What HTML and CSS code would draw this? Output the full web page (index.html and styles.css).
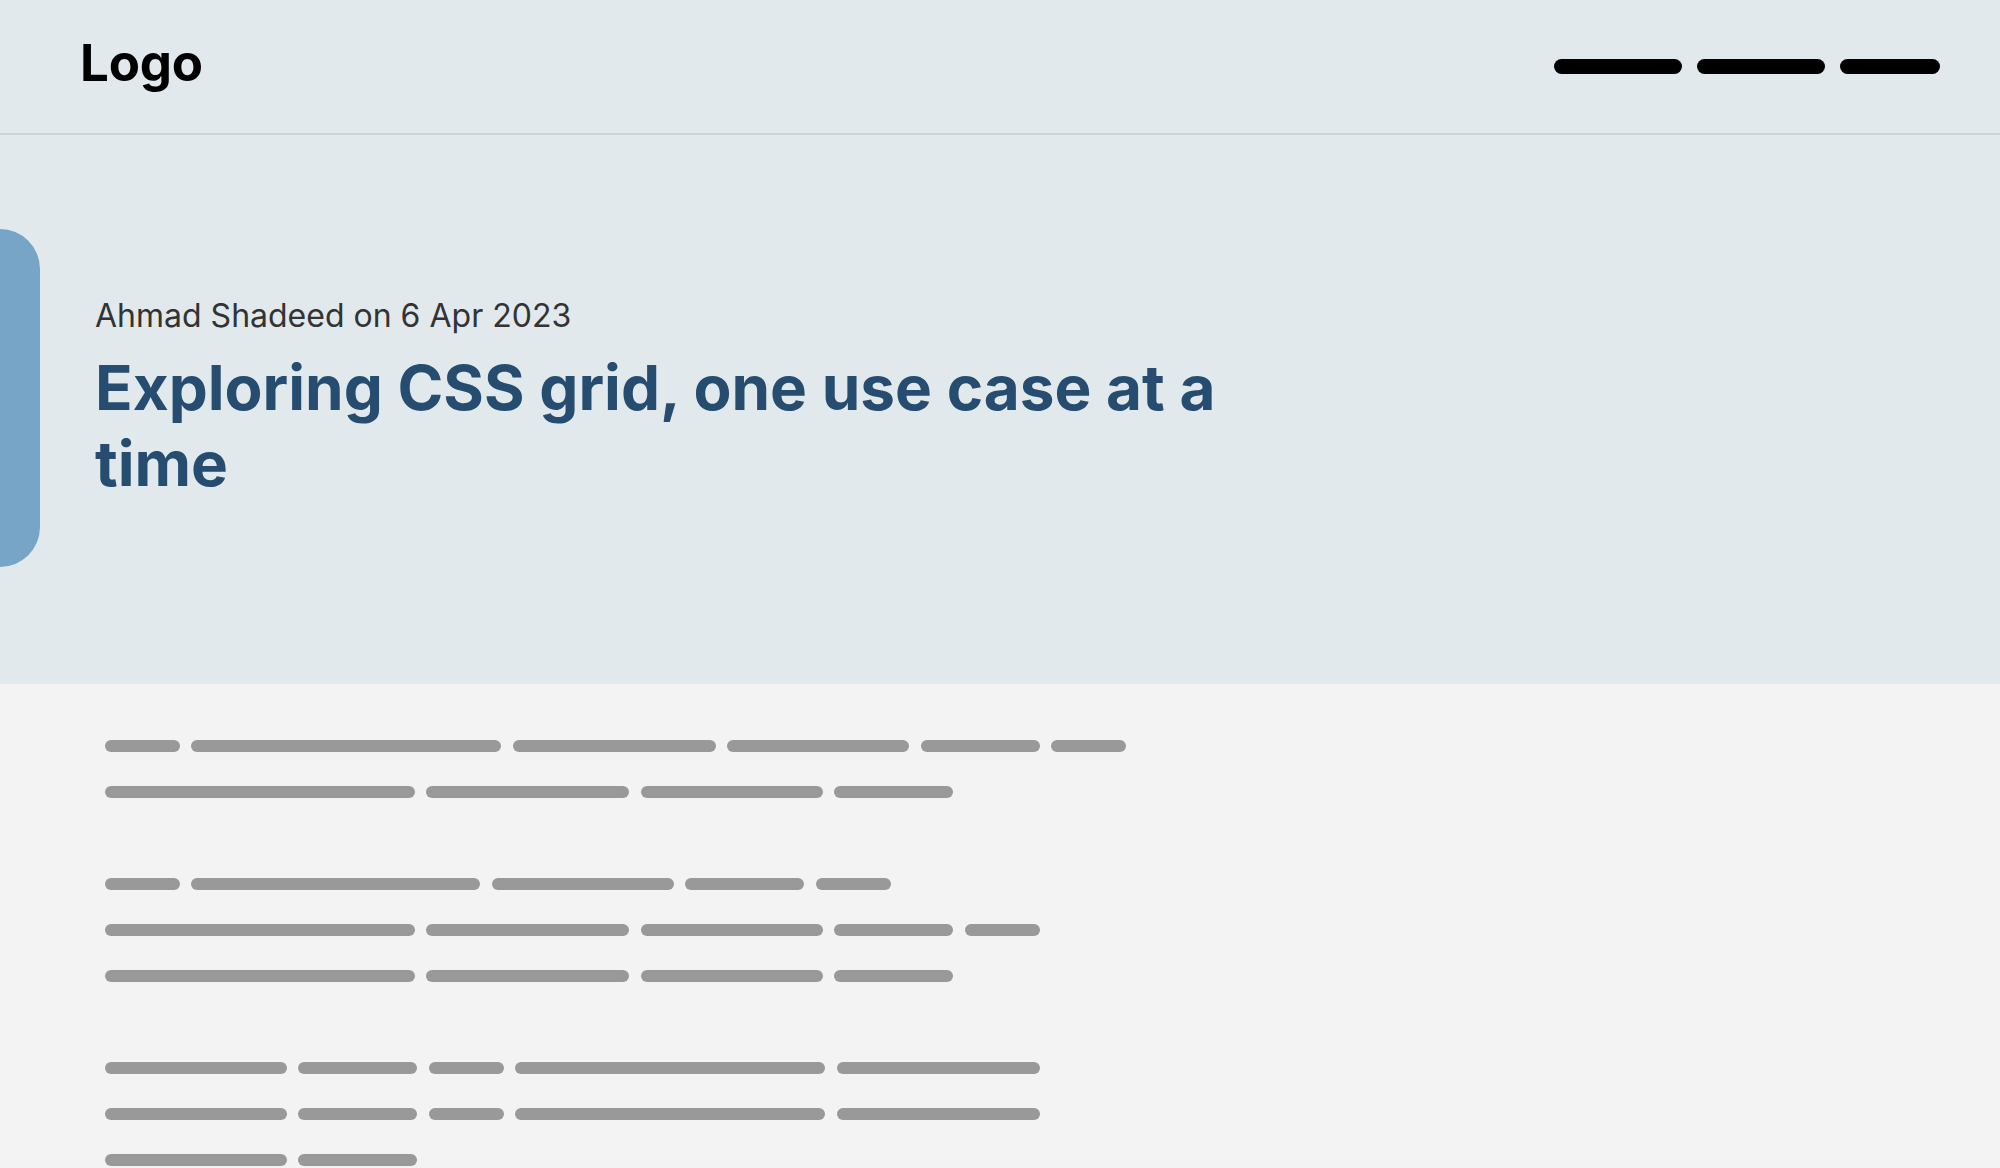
FILE: index.html
```html
<!DOCTYPE html>
<html lang="en">
<head>
<meta charset="utf-8">
<title>Exploring CSS grid, one use case at a time</title>
<link rel="stylesheet" href="styles.css">
</head>
<body>
<header class="site-header">
  <div class="logo">Logo</div>
  <nav class="nav">
    <span class="nav-item nav-item--lg"></span>
    <span class="nav-item nav-item--lg"></span>
    <span class="nav-item nav-item--sm"></span>
  </nav>
</header>

<section class="hero">
  <div class="hero-row">
    <div class="hero-accent"></div>
    <div class="hero-text">
      <p class="hero-meta">Ahmad Shadeed on 6 Apr 2023</p>
      <h1 class="hero-title">Exploring CSS grid, one use case at a time</h1>
    </div>
  </div>
</section>

<main class="content">
  <div class="para">
    <div class="line"><span class="w75"></span><span class="w310"></span><span class="w203"></span><span class="w182"></span><span class="w119"></span><span class="w75"></span></div>
    <div class="line"><span class="w310"></span><span class="w203"></span><span class="w182"></span><span class="w119"></span></div>
  </div>
  <div class="para">
    <div class="line"><span class="w75"></span><span class="w289"></span><span class="w182"></span><span class="w119"></span><span class="w75"></span></div>
    <div class="line"><span class="w310"></span><span class="w203"></span><span class="w182"></span><span class="w119"></span><span class="w75"></span></div>
    <div class="line"><span class="w310"></span><span class="w203"></span><span class="w182"></span><span class="w119"></span></div>
  </div>
  <div class="para">
    <div class="line"><span class="w182"></span><span class="w119"></span><span class="w75"></span><span class="w310"></span><span class="w203"></span></div>
    <div class="line"><span class="w182"></span><span class="w119"></span><span class="w75"></span><span class="w310"></span><span class="w203"></span></div>
    <div class="line"><span class="w182"></span><span class="w119"></span></div>
  </div>
</main>
</body>
</html>
```

FILE: styles.css
```css
* { box-sizing: border-box; }

html, body {
  margin: 0;
  padding: 0;
}

body {
  font-family: Inter, "Noto Sans", "Liberation Sans", sans-serif;
  background: #f3f3f3;
  color: #111;
}

.site-header {
  height: 135px;
  display: flex;
  align-items: center;
  justify-content: space-between;
  padding: 0 60px 0 80px;
  background: #e1e9ed;
  border-bottom: 2px solid #c9d3d8;
}

.logo {
  font-size: 51px;
  font-weight: 700;
  color: #000;
  line-height: 1.2;
  letter-spacing: -0.2px;
  margin-bottom: 8px;
}

.nav {
  display: flex;
  gap: 15px;
}

.nav-item {
  display: block;
  height: 15px;
  background: #000;
  border-radius: 8px;
}
.nav-item--lg { width: 128px; }
.nav-item--sm { width: 100px; }

.hero {
  background: #e1e9ed;
  padding: 94px 0 117px;
}

.hero-row {
  display: flex;
  align-items: center;
  gap: 55px;
}

.hero-accent {
  flex: none;
  width: 40px;
  height: 338px;
  background: #77a5c7;
  border-radius: 0 40px 40px 0;
}

.hero-text {
  max-width: 1200px;
  padding-top: 3px;
}

.hero-meta {
  margin: 0 0 15px;
  font-size: 32px;
  line-height: 1.2;
  color: #333;
}

.hero-title {
  margin: 0;
  font-size: 62px;
  line-height: 76px;
  font-weight: 700;
  color: #264d70;
}

.content {
  padding: 56px 0 0 104.5px;
  display: flex;
  flex-direction: column;
  gap: 80px;
}

.para {
  display: flex;
  flex-direction: column;
  gap: 34px;
}

.line {
  display: flex;
  gap: 11.5px;
}

.line span {
  display: block;
  height: 12px;
  background: #999;
  border-radius: 6px;
}

.w75 { width: 75px; }
.w119 { width: 119px; }
.w182 { width: 182px; }
.w203 { width: 203px; }
.w289 { width: 289px; }
.w310 { width: 310px; }
```
